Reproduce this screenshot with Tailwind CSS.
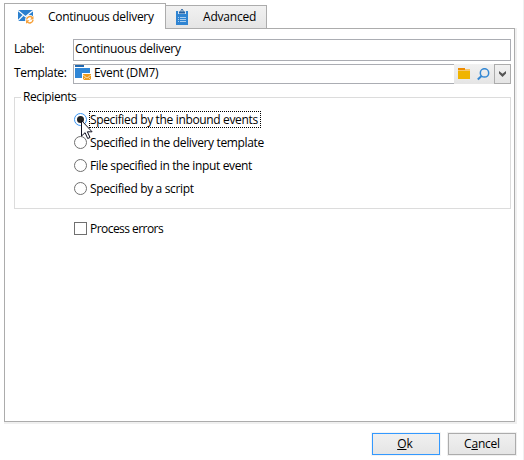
<!DOCTYPE html>
<html lang="en">
<head>
<meta charset="utf-8">
<title>Continuous delivery</title>
<script src="https://cdn.jsdelivr.net/npm/@tailwindcss/browser@4"></script>
</head>
<body class="bg-white">
<main class="relative flex h-[460px] w-[524px] flex-col overflow-hidden border-r border-[#f0f0f0] bg-white pt-[3px] pl-1 font-['Open_Sans','Noto_Sans',sans-serif] text-[12px] leading-4 tracking-[-0.35px] text-black">
  <nav class="flex h-[25px] items-end">
    <div class="relative z-10 -mb-px flex h-[26px] w-[162px] shrink-0 items-center border border-b-0 border-[#acacac] bg-white pl-[13px]">
      <svg class="mr-[13px] shrink-0" width="17" height="16" viewBox="0 0 17 16">
        <path fill="#2b80cf" d="M0 1h15v11H0z"/>
        <path d="M0 1.5l7.5 6.3L15 1.5M0 11.5l5-5M15 11.5l-5-5" fill="none" stroke="#fff" stroke-width="1.2"/>
        <circle cx="11.8" cy="10.8" r="4.7" fill="#fff"/>
        <path d="M8.6 10.5a3.3 3.3 0 0 1 5.8-1.700M15 11a3.3 3.3 0 0 1-5.8 1.800" fill="none" stroke="#f5a03a" stroke-width="1.500"/>
        <path fill="#f5a03a" d="M15.500 7v3.500H12zM8 14.800v-3.500h3.500z"/>
      </svg>
      <span class="tracking-[-0.3px] whitespace-nowrap">Continuous delivery</span>
    </div>
    <div class="flex h-[23px] w-[101px] shrink-0 items-center border border-b-0 border-l-0 border-[#acacac] bg-linear-to-b from-[#f1f1f1] to-[#e5e5e5] pl-[10px]">
      <svg class="mr-[15px] shrink-0" width="12" height="16" viewBox="0 0 12 16">
        <path fill="#2f84d2" d="M0 2h12v14H0z"/>
        <path fill="#d5e4f2" d="M2 2h8v3H2z"/>
        <path fill="#2460a0" d="M3 2.500h1.500V1.500L5.500 0h1l1 1.500v1H9V4.500H3z"/>
        <path fill="#fff" d="M5.400 1.200h1.200v1.200H5.400z"/>
        <path d="M2 8.500h1M4 8.500h6M2 10.500h1M4 10.500h6M2 12.500h1M4 12.500h6" stroke="#a9cdee"/>
      </svg>
      <span class="tracking-[-0.2px]">Advanced</span>
    </div>
  </nav>

  <section class="h-[394px] w-[511px] shrink-0 border border-[#acacac] bg-white pt-[10px] pl-[9px] shadow-[1px_1px_0_1px_#f0f0f0]">
    <div class="flex h-[22px]">
      <label class="w-[59px] pt-[2px] tracking-[-0.5px]">Label:</label>
      <div class="w-[438px] border border-[#abadb3] pt-px pl-px tracking-[-0.3px]">Continuous delivery</div>
    </div>
    <div class="mt-[3px] flex h-5">
      <label class="w-[59px] pt-px">Template:</label>
      <div class="flex w-[381px] border border-r-0 border-[#abadb3] pl-px">
        <svg class="mr-[3px] shrink-0" width="16" height="16" viewBox="0 0 16 16">
          <path fill="#2369b0" d="M0 0h9v2H0z"/>
          <path fill="#2f86d6" d="M0 3h15v10H0z"/>
          <path fill="#fff" d="M7 8h9v8H7z"/>
          <path fill="#ee9a1c" d="M8 9h8v6H8z"/>
          <path d="M8 10l4 3 4-3M8 15l2.500-2.500M16 15l-2.500-2.500" fill="none" stroke="#fbe0b4" stroke-width="0.900"/>
        </svg>
        <span class="tracking-[-0.3px]">Event (DM7)</span>
      </div>
      <div class="flex w-10 bg-linear-to-b from-[#f1f1f1] to-[#e5e5e5] pt-1 pl-1">
        <svg width="12" height="12" viewBox="0 0 12 12"><path fill="#ed8b00" d="M0 0h7v2H0z"/><path fill="#f6c66c" d="M7 1h5v2H0V2h7z"/><path fill="#f0b400" d="M0 3h12v8H0z"/></svg>
        <svg class="ml-[7px]" width="13" height="13" viewBox="0 0 13 13"><circle cx="7.500" cy="4.900" r="4.200" fill="none" stroke="#3488d4" stroke-width="1.500"/><path d="M4.500 8L.8 11.500" stroke="#3488d4" stroke-width="2"/></svg>
      </div>
      <div class="flex w-[17px] items-center justify-center border border-[#acacac] bg-linear-to-b from-[#f1f1f1] to-[#e5e5e5]">
        <svg width="7" height="6" viewBox="0 0 7 6"><path fill="#555" d="M0 0l3.500 2.700L7 0v2.500L3.500 6 0 2.500z"/></svg>
      </div>
    </div>

    <div class="relative mt-[13px] flex h-[112px] w-[497px] flex-col border border-[#dcdcdc] pt-[13px] pl-[59px]">
      <span class="absolute -top-[9px] left-[6px] bg-white pl-[2px] tracking-[-0.4px]">Recipients</span>
      <div class="flex h-[17px] items-center">
        <span class="flex size-[13px] items-center justify-center rounded-full border border-[#3a96f5]"><i class="size-[7px] rounded-full bg-[#222]"></i></span>
        <span class="ml-[2px] h-[17px] w-[172px] border border-dotted border-black leading-[15px] whitespace-nowrap">Specified by the inbound events</span>
      </div>
      <div class="flex h-[23px] items-center pt-[6px]"><span class="size-[13px] rounded-full border border-[#707070]"></span><span class="ml-[3px]">Specified in the delivery template</span></div>
      <div class="flex h-[23px] items-center pt-[6px]"><span class="size-[13px] rounded-full border border-[#707070]"></span><span class="ml-[3px]">File specified in the input event</span></div>
      <div class="flex h-[23px] items-center pt-[6px]"><span class="size-[13px] rounded-full border border-[#707070]"></span><span class="ml-[3px]">Specified by a script</span></div>
    </div>
    <div class="mt-[11px] ml-[60px] flex h-[17px] items-center"><span class="size-[13px] border border-[#707070]"></span><span class="ml-[3px] tracking-[-0.55px]">Process errors</span></div>
  </section>

  <footer class="mt-[11px] ml-[368px] flex gap-2">
    <button class="h-[22px] w-[68px] border border-[#3399ff] bg-linear-to-b from-[#f0f0f0] to-[#e5e5e5] pr-[2px] tracking-normal shadow-[0_0_0_1px_#f4f4f4]"><u>O</u>k</button>
    <button class="h-[22px] w-[68px] border border-[#acacac] bg-linear-to-b from-[#f0f0f0] to-[#e5e5e5] tracking-[-0.2px] shadow-[0_0_0_1px_#f0f0f0]">C<u>a</u>ncel</button>
  </footer>

  <svg class="absolute top-[119px] left-[80px] z-20" width="14" height="21" viewBox="0 0 14 21"><path d="M1.500 1.500v15.500l3.600-3.300 2.600 5.800 2.300-1-2.600-5.700h4.700z" fill="#fff" stroke="#101020"/></svg>
</main>
</body>
</html>
